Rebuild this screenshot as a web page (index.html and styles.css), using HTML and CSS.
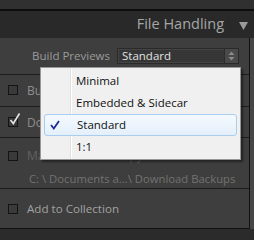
FILE: index.html
```html
<!DOCTYPE html>
<html>
<head>
<meta charset="utf-8">
<link rel="stylesheet" href="styles.css">
</head>
<body>
<div class="topbar"></div>
<div class="header">
  <span class="title">File Handling</span>
  <svg class="tri" width="9" height="9" viewBox="0 0 9 9"><path d="M0 1 H9 L4.5 9 Z" fill="#9a9a9a"/></svg>
</div>
<div class="frame">
<div class="panel">
  <div class="build-row">
    <span class="label">Build Previews</span>
    <div class="select">
      <span class="sel-text">Standard</span>
      <span class="spin">
        <svg width="7" height="10" viewBox="0 0 7 10"><path d="M3.5 0.5 L6.5 4 H0.5 Z M3.5 9.5 L6.5 6 H0.5 Z" fill="#8a8a8a"/></svg>
      </span>
    </div>
  </div>
  <div class="row r1">
    <span class="cb"></span><span class="txt">Build Smart Previews</span>
  </div>
  <div class="row r2">
    <span class="cb checked">
      <svg class="ck" width="12" height="13" viewBox="0 0 12 13"><path d="M1.5 7 L4.3 10.5 L10.5 0.5" fill="none" stroke="#e6e6e6" stroke-width="1.6"/></svg>
    </span><span class="txt">Don't Import Suspected Duplicates</span>
  </div>
  <div class="row r3">
    <div class="line"><span class="cb"></span><span class="txt dim">Make a Second Copy To:</span></div>
    <div class="path">C: \ Documents a...\ Download Backups</div>
  </div>
  <div class="row r4">
    <span class="cb"></span><span class="txt">Add to Collection</span>
  </div>
</div>
</div>
<div class="menu">
  <div class="sep"></div>
  <div class="item">Minimal</div>
  <div class="item">Embedded &amp; Sidecar</div>
  <div class="item active">
    <svg class="mk" width="10" height="10" viewBox="0 0 10 10"><path d="M1 5 L3.8 8.5 L9 1" fill="none" stroke="#1f2b8f" stroke-width="1.8"/></svg>
    Standard
  </div>
  <div class="item">1:1</div>
</div>
</body>
</html>
```
FILE: styles.css
```css
html, body {
  margin: 0;
  padding: 0;
}
body {
  width: 254px;
  height: 240px;
  background: #2b2b2b;
  font-family: "Open Sans", "Noto Sans", sans-serif;
  position: relative;
  overflow: hidden;
}
.topbar {
  height: 9px;
  background: #303030;
  border-bottom: 2px solid #0d0d0d;
}
.header {
  height: 27px;
  background: #292929;
  display: flex;
  align-items: center;
  justify-content: flex-end;
  padding-right: 6px;
  gap: 15px;
}
.title {
  font-size: 14.5px;
  color: #a6a6a6;
  line-height: 1;
  margin-top: -1px;
}
.tri {
  display: block;
  margin-top: 1px;
}
.frame {
  width: 254px;
  background: #464646;
}
.panel {
  width: 249px;
  height: 190px;
  background: #3e3e3e;
  border-right: 1px solid #111;
  border-bottom: 1px solid #111;
  box-sizing: content-box;
  display: flex;
  flex-direction: column;
}
.build-row {
  height: 36px;
  display: flex;
  justify-content: flex-end;
  align-items: flex-start;
  padding-right: 10px;
  padding-top: 10px;
  box-sizing: border-box;
  gap: 7px;
}
.label {
  font-size: 11.5px;
  color: #9b9b9b;
  line-height: 16px;
}
.select {
  width: 122px;
  height: 16px;
  box-sizing: border-box;
  background: #363636;
  border: 1px solid #2a2a2a;
  box-shadow: inset 0 0 0 1px #444;
  display: flex;
  align-items: center;
}
.sel-text {
  flex: 1;
  font-size: 11.5px;
  color: #e2e2e2;
  padding-left: 4px;
  line-height: 14px;
}
.spin {
  width: 13px;
  height: 14px;
  background: #4a4a4a;
  border-left: 1px solid #2c2c2c;
  display: flex;
  align-items: center;
  justify-content: center;
}
.spin svg { display: block; }
.row {
  border-top: 1px solid #1c1c1c;
  display: flex;
  align-items: center;
  box-sizing: border-box;
  padding-left: 8px;
}
.r1 { height: 32px; }
.r2 { height: 32px; }
.r3 {
  height: 51px;
  flex-direction: column;
  align-items: stretch;
  justify-content: flex-start;
  padding-top: 9px;
}
.r4 { height: 40px; }
.line {
  display: flex;
  align-items: center;
}
.cb {
  width: 10px;
  height: 10px;
  box-sizing: border-box;
  border: 1px solid #141414;
  background: #3a3a3a;
  position: relative;
  flex: none;
}
.ck {
  position: absolute;
  left: 0;
  top: -5px;
}
.txt {
  font-size: 12px;
  color: #a2a2a2;
  margin-left: 9px;
  white-space: nowrap;
}
.r4 .txt { font-size: 11.6px; }
.r1 .txt, .r2 .txt { color: #8e8e8e; }
.txt.dim { color: #626262; }
.path {
  font-size: 11.3px;
  color: #727272;
  margin-left: 21px;
  margin-top: 7px;
  white-space: nowrap;
}
.menu {
  position: absolute;
  left: 40px;
  top: 67px;
  width: 201px;
  height: 93px;
  box-sizing: border-box;
  background: #f0f0f0;
  border: 1px solid #979797;
  box-shadow: 2px 2px 2px rgba(0,0,0,0.45);
  padding: 2px 2px 1px 2px;
}
.sep {
  position: absolute;
  left: 29px;
  top: 1px;
  bottom: 1px;
  width: 1px;
  background: #e0e0e0;
  box-shadow: 1px 0 0 #fff;
}
.item {
  height: 22px;
  line-height: 22px;
  padding-left: 33px;
  font-size: 11.5px;
  color: #111;
  position: relative;
  box-sizing: border-box;
}
.item.active {
  border: 1px solid #a9cdef;
  border-radius: 3px;
  background: linear-gradient(#f4f9fe, #e4effb);
  line-height: 20px;
  padding-left: 32px;
  margin: 0 1px;
}
.mk {
  position: absolute;
  left: 5px;
  top: 5px;
}
```
